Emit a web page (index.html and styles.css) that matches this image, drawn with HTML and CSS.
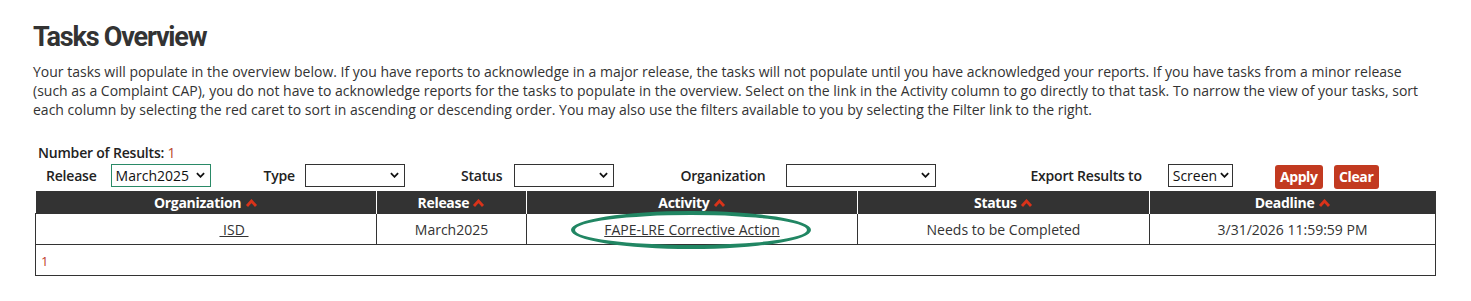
FILE: index.html
```html
<!DOCTYPE html>
<html>
<head>
<meta charset="utf-8">
<link rel="stylesheet" href="styles.css">
</head>
<body>
<div class="page">
  <h1 class="title">Tasks Overview</h1>
  <p class="intro">Your tasks will populate in the overview below. If you have reports to acknowledge in a major release, the tasks will not populate until you have acknowledged your reports. If you have tasks from a minor release (such as a Complaint CAP), you do not have to acknowledge reports for the tasks to populate in the overview. Select on the link in the Activity column to go directly to that task. To narrow the view of your tasks, sort each column by selecting the red caret to sort in ascending or descending order. You may also use the filters available to you by selecting the Filter link to the right.</p>

  <div class="results">Number of Results: <span class="count">1</span></div>

  <div class="filters">
    <label class="flabel l-release">Release</label>
    <div class="sel sel-release focus"><span>March2025</span><svg class="chev" viewBox="0 0 10 6"><path d="M1 1 L5 5 L9 1" fill="none" stroke="#111" stroke-width="2"/></svg></div>
    <label class="flabel l-type">Type</label>
    <div class="sel sel-type"><span></span><svg class="chev" viewBox="0 0 10 6"><path d="M1 1 L5 5 L9 1" fill="none" stroke="#111" stroke-width="2"/></svg></div>
    <label class="flabel l-status">Status</label>
    <div class="sel sel-status"><span></span><svg class="chev" viewBox="0 0 10 6"><path d="M1 1 L5 5 L9 1" fill="none" stroke="#111" stroke-width="2"/></svg></div>
    <label class="flabel l-org">Organization</label>
    <div class="sel sel-org"><span></span><svg class="chev" viewBox="0 0 10 6"><path d="M1 1 L5 5 L9 1" fill="none" stroke="#111" stroke-width="2"/></svg></div>
    <label class="flabel l-export">Export Results to</label>
    <div class="sel sel-export"><span>Screen</span><svg class="chev" viewBox="0 0 10 6"><path d="M1 1 L5 5 L9 1" fill="none" stroke="#111" stroke-width="2"/></svg></div>
    <button class="btn btn-apply">Apply</button>
    <button class="btn btn-clear">Clear</button>
  </div>

  <table class="grid">
    <colgroup>
      <col class="c-org"><col class="c-rel"><col class="c-act"><col class="c-stat"><col class="c-dead">
    </colgroup>
    <thead>
      <tr>
        <th>Organization <svg class="caret" viewBox="0 0 12 8"><path d="M1.5 7 L6 2 L10.5 7" fill="none" stroke="#d9331a" stroke-width="2.8"/></svg></th>
        <th>Release <svg class="caret" viewBox="0 0 12 8"><path d="M1.5 7 L6 2 L10.5 7" fill="none" stroke="#d9331a" stroke-width="2.8"/></svg></th>
        <th>Activity <svg class="caret" viewBox="0 0 12 8"><path d="M1.5 7 L6 2 L10.5 7" fill="none" stroke="#d9331a" stroke-width="2.8"/></svg></th>
        <th>Status <svg class="caret" viewBox="0 0 12 8"><path d="M1.5 7 L6 2 L10.5 7" fill="none" stroke="#d9331a" stroke-width="2.8"/></svg></th>
        <th>Deadline <svg class="caret" viewBox="0 0 12 8"><path d="M1.5 7 L6 2 L10.5 7" fill="none" stroke="#d9331a" stroke-width="2.8"/></svg></th>
      </tr>
    </thead>
    <tbody>
      <tr class="row">
        <td class="org-cell"><a href="#" class="link">&nbsp;ISD&nbsp;</a></td>
        <td>March2025</td>
        <td class="act-cell"><span class="circled"><a href="#" class="link">FAPE-LRE Corrective Action</a><span class="ring"></span></span></td>
        <td>Needs to be Completed</td>
        <td>3/31/2026 11:59:59 PM</td>
      </tr>
      <tr class="pager">
        <td colspan="5"><span class="page-num">1</span></td>
      </tr>
    </tbody>
  </table>
</div>
</body>
</html>
```

FILE: styles.css
```css
html, body {
  margin: 0;
  padding: 0;
  background: #fff;
}
body {
  font-family: "Open Sans", "Liberation Sans", sans-serif;
  color: #333;
}
.page {
  padding: 20px 0 0 33px;
  width: 1405px;
}
.title {
  font-family: Roboto, "Open Sans", sans-serif;
  font-weight: 700;
  font-size: 27px;
  letter-spacing: -1.2px;
  line-height: 34px;
  margin: 0 0 8px 0;
  color: #333;
}
.intro {
  font-size: 14px;
  line-height: 19px;
  margin: 0 0 24px 0;
  color: #333;
}
.results {
  font-size: 14px;
  font-weight: 600;
  line-height: 19px;
  margin-left: 5px;
  color: #222;
  letter-spacing: -0.2px;
}
.results .count {
  color: #b8452a;
  font-weight: 400;
}
.filters {
  display: flex;
  align-items: center;
  height: 26px;
  margin-top: 0;
  font-size: 14px;
}
.flabel {
  color: #222;
  font-size: 14px;
  font-weight: 600;
  letter-spacing: -0.2px;
}
.l-release { margin-left: 13px; }
.sel {
  box-sizing: border-box;
  height: 23px;
  border: 1px solid #333;
  display: flex;
  align-items: center;
  justify-content: space-between;
  padding: 0 5px 0 4px;
  font-size: 14px;
  color: #111;
  background: #fff;
}
.sel.focus { border-color: #2a8a67; }
.chev { width: 9px; height: 6px; }
.sel-release { width: 100px; margin-left: 14px; }
.l-type { margin-left: 53px; }
.sel-type { width: 100px; margin-left: 10px; }
.l-status { margin-left: 56px; }
.sel-status { width: 100px; margin-left: 12px; }
.l-org { margin-left: 66px; }
.sel-org { width: 150px; margin-left: 21px; }
.l-export { margin-left: 94px; }
.sel-export { width: 65px; margin-left: 26px; padding-left: 4px; padding-right: 3px; }
.btn {
  font-family: "Open Sans", sans-serif;
  font-weight: 700;
  font-size: 14px;
  color: #fff;
  background: #c23a20;
  border: none;
  border-radius: 3px;
  height: 24px;
  padding: 0 4px;
  margin-top: 3px;
  letter-spacing: -0.4px;
}
.btn-apply { margin-left: 42px; width: 48px; }
.btn-clear { margin-left: 11px; width: 45px; }

.grid {
  margin-top: 3px;
  margin-left: 2px;
  width: 1400px;
  border-collapse: collapse;
  table-layout: fixed;
  font-size: 14px;
}
.c-org { width: 341px; }
.c-rel { width: 150px; }
.c-act { width: 331px; }
.c-stat { width: 292px; }
.c-dead { width: 286px; }
.grid th {
  background: #333;
  color: #fff;
  font-weight: 700;
  height: 22px;
  padding: 0;
  border-left: 1px solid #fff;
  letter-spacing: -0.3px;
  font-size: 14px;
}
.grid th:first-child { border-left: none; }
.caret { width: 13px; height: 8px; vertical-align: 1px; }
.grid td {
  border: 1px solid #333;
  text-align: center;
  padding: 0;
  color: #333;
  font-size: 14px;
}
.row td { height: 30px; }
.grid td.org-cell { padding-left: 56px; }
.link { color: #333; text-decoration: underline; }
.act-cell { position: relative; }
.circled { position: relative; display: inline-block; }
.ring {
  position: absolute;
  left: -33px;
  right: -31px;
  top: -9px;
  bottom: -10px;
  border: 4px solid #218663;
  border-radius: 50%;
}
.pager td {
  height: 30px;
  text-align: left;
  padding-left: 5px;
}
.page-num { color: #c0392b; font-size: 13px; }
```
